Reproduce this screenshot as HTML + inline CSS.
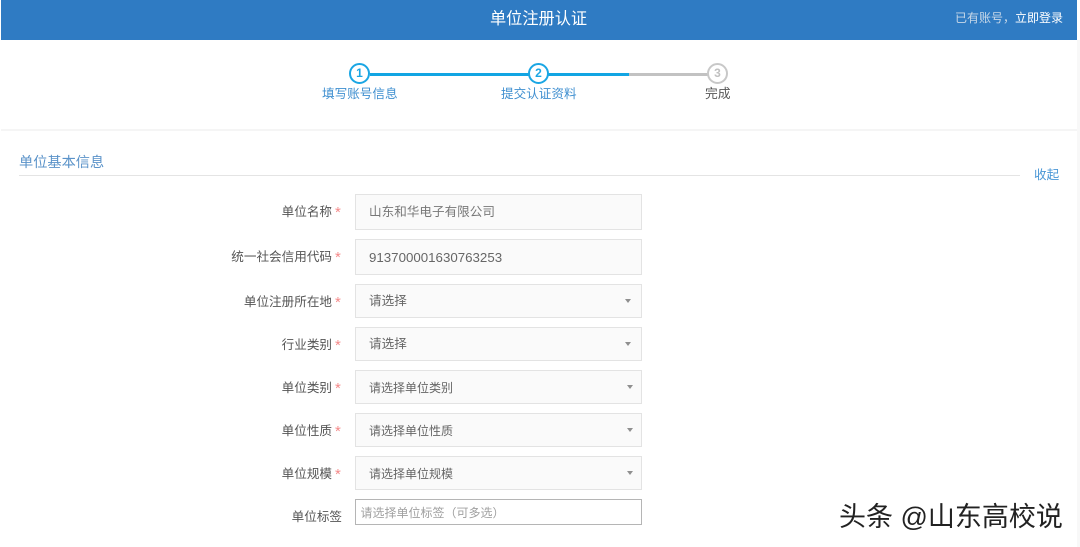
<!DOCTYPE html>
<html lang="zh-CN">
<head>
<meta charset="utf-8">
<title>单位注册认证</title>
<style>
html,body{margin:0;padding:0;background:#fff;}
body{position:relative;width:1080px;height:547px;overflow:hidden;font-family:"Liberation Sans","Noto Sans CJK SC",sans-serif;color:#666;}
.w{position:absolute;left:0;top:0;width:1080px;height:547px;filter:blur(.3px);}
.a{position:absolute;white-space:nowrap;}
.hdr{left:1px;top:0;width:1076px;height:40px;background:#2f7bc3;}
.rs{left:1077px;top:40px;width:3px;height:507px;background:#f8f8f8;}
.circ{position:absolute;box-sizing:border-box;width:21px;height:21px;border-radius:50%;border:2px solid #1aa6e4;background:#fff;text-align:center;font:bold 12px/17px "Liberation Sans",sans-serif;color:#1aa6e4;}
.lb{font-size:12.6px;line-height:18px;color:#555;text-align:right;width:150px;left:182px;}
.st{font-size:15px;line-height:18px;color:#f58a8a;left:335px;}
.box{box-sizing:border-box;left:354.5px;width:287px;background:#fafafa;border:1px solid #e3e3e3;font-size:12.6px;color:#666;padding-left:13.5px;}
.sm{font-size:12px;}
.arr{position:absolute;width:0;height:0;border-left:3.5px solid transparent;border-right:3.5px solid transparent;border-top:4.5px solid #8f8f8f;}
</style>
</head>
<body>
<div class="w">
<div class="a hdr"></div>
<div class="a rs"></div>
<div class="a" style="left:490px;top:9px;font-size:16.2px;line-height:20px;color:#fff;">单位注册认证</div>
<div class="a" style="left:955px;top:9px;font-size:12px;line-height:18px;color:#c8d8e8;">已有账号，<span style="color:#fff;">立即登录</span></div>

<div class="a" style="left:370px;top:72.5px;width:259px;height:3px;background:#12a5e3;"></div>
<div class="a" style="left:629px;top:72.5px;width:80px;height:3px;background:#c2c2c2;"></div>
<div class="circ" style="left:349px;top:63px;">1</div>
<div class="circ" style="left:528px;top:63px;">2</div>
<div class="circ" style="left:707px;top:63px;border-color:#c8c8c8;color:#c0c0c0;">3</div>
<div class="a" style="left:322px;top:85px;font-size:12.6px;line-height:18px;color:#3f8fd0;">填写账号信息</div>
<div class="a" style="left:501px;top:85px;font-size:12.6px;line-height:18px;color:#3f8fd0;">提交认证资料</div>
<div class="a" style="left:705px;top:85px;font-size:12.8px;line-height:18px;color:#555;">完成</div>

<div class="a" style="left:1px;top:129px;width:1076px;height:2px;background:#f5f5f5;"></div>
<div class="a" style="left:19px;top:154px;font-size:14.2px;line-height:18px;color:#5b93c9;">单位基本信息</div>
<div class="a" style="left:19px;top:175px;width:1001px;height:1px;background:#e4e4e4;"></div>
<div class="a" style="left:1034px;top:166px;font-size:12.6px;line-height:18px;color:#4a97d6;">收起</div>

<div class="a lb" style="top:203px;">单位名称</div><div class="a st" style="top:204px;">*</div>
<div class="a box" style="top:194px;height:36px;line-height:35px;color:#777;">山东和华电子有限公司</div>

<div class="a lb" style="top:248px;">统一社会信用代码</div><div class="a st" style="top:249px;">*</div>
<div class="a box" style="top:239px;height:36px;line-height:35px;font-size:13.3px;">913700001630763253</div>

<div class="a lb" style="top:293px;">单位注册所在地</div><div class="a st" style="top:294px;">*</div>
<div class="a box" style="top:284px;height:34px;line-height:33px;">请选择<i class="arr" style="left:269px;top:14px;"></i></div>

<div class="a lb" style="top:336px;">行业类别</div><div class="a st" style="top:337px;">*</div>
<div class="a box" style="top:327px;height:34px;line-height:33px;">请选择<i class="arr" style="left:269px;top:14px;"></i></div>

<div class="a lb" style="top:379px;">单位类别</div><div class="a st" style="top:380px;">*</div>
<div class="a box sm" style="top:370px;height:34px;line-height:34px;">请选择单位类别<i class="arr" style="left:271px;top:14px;"></i></div>

<div class="a lb" style="top:422px;">单位性质</div><div class="a st" style="top:423px;">*</div>
<div class="a box sm" style="top:413px;height:34px;line-height:34px;">请选择单位性质<i class="arr" style="left:271px;top:14px;"></i></div>

<div class="a lb" style="top:465px;">单位规模</div><div class="a st" style="top:466px;">*</div>
<div class="a box sm" style="top:456px;height:34px;line-height:34px;">请选择单位规模<i class="arr" style="left:271px;top:14px;"></i></div>

<div class="a lb" style="top:508px;left:192px;">单位标签</div>
<div class="a box" style="top:499px;height:26px;line-height:27px;background:#fff;border-color:#b5b5b5;padding-left:5px;color:#a0a0a0;font-size:12px;">请选择单位标签（可多选）</div>

<div class="a" style="left:839px;top:499px;font-size:27px;line-height:37px;color:#222;">头条 @山东高校说</div>
</div>
</body>
</html>
